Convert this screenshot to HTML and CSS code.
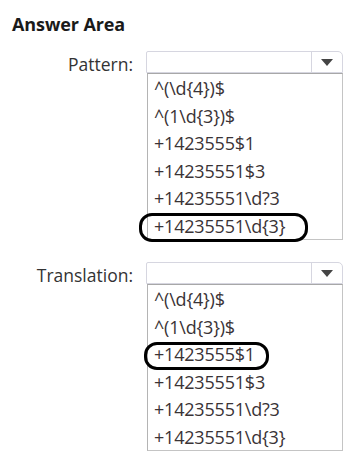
FILE: index.html
```html
<!DOCTYPE html>
<html>
<head>
<meta charset="utf-8">
<link rel="stylesheet" href="styles.css">
</head>
<body>
<div class="page">
  <h1 class="title">Answer Area</h1>
  <div class="field">
    <div class="label">Pattern:</div>
    <div class="control">
      <div class="select"><span class="select-value"></span><span class="select-btn"><span class="tri"></span></span></div>
      <ul class="list">
        <li class="item">^(\d{4})$</li>
        <li class="item">^(1\d{3})$</li>
        <li class="item">+1423555$1</li>
        <li class="item">+14235551$3</li>
        <li class="item">+14235551\d?3</li>
        <li class="item"><span class="circled wide">+14235551\d{3}</span></li>
      </ul>
    </div>
  </div>
  <div class="field second">
    <div class="label">Translation:</div>
    <div class="control">
      <div class="select"><span class="select-value"></span><span class="select-btn"><span class="tri"></span></span></div>
      <ul class="list">
        <li class="item">^(\d{4})$</li>
        <li class="item">^(1\d{3})$</li>
        <li class="item"><span class="circled">+1423555$1</span></li>
        <li class="item">+14235551$3</li>
        <li class="item">+14235551\d?3</li>
        <li class="item">+14235551\d{3}</li>
      </ul>
    </div>
  </div>
</div>
</body>
</html>
```
FILE: styles.css
```css
html, body {
  margin: 0;
  padding: 0;
  background: #fff;
}
.page {
  font-family: "Open Sans", "Noto Sans", sans-serif;
  color: #333;
  padding: 11px 0 0 12px;
  width: 347px;
}
.title {
  margin: 0;
  font-size: 18px;
  font-weight: 700;
  line-height: 26px;
  color: #1a1a1a;
  letter-spacing: -0.1px;
}
.field {
  display: grid;
  grid-template-columns: 121px 197px;
  column-gap: 13px;
  margin-top: 14px;
}
.field.second {
  margin-top: 22px;
}
.label {
  text-align: right;
  font-size: 17.5px;
  line-height: 22px;
  padding-top: 2px;
  color: #333;
}
.control {
  display: flex;
  flex-direction: column;
}
.select {
  height: 22px;
  border: 1px solid #d6d6e0;
  border-radius: 2px 5px 0 0;
  display: flex;
  box-sizing: border-box;
}
.select-value {
  flex: 1;
}
.select-btn {
  width: 30px;
  border-left: 1px solid #d6d6e0;
  display: flex;
  align-items: center;
  justify-content: center;
}
.tri {
  width: 0;
  height: 0;
  border-left: 6px solid transparent;
  border-right: 6px solid transparent;
  border-top: 7px solid #444;
}
.list {
  list-style: none;
  margin: 0 0 0 1px;
  padding: 1px 0 0 0;
  border: 1px solid #b4b4b4;
  border-top-color: #a8a8a8;
  border-right-color: #c4c4c4;
  border-bottom-color: #c4c4c4;
  height: 167px;
  box-sizing: border-box;
}
.item {
  height: 27.5px;
  line-height: 27.5px;
  padding-left: 6px;
  font-size: 18px;
  color: #3a3336;
  white-space: nowrap;
  letter-spacing: -0.2px;
}
.circled {
  position: relative;
  display: inline-block;
}
.circled::after {
  content: "";
  position: absolute;
  left: -10px;
  right: -14px;
  top: 1px;
  bottom: -1px;
  border: 3.5px solid #000;
  border-radius: 13px;
}
.circled.wide::after {
  left: -15px;
  right: -23px;
  top: 0px;
  bottom: -2px;
}
```
